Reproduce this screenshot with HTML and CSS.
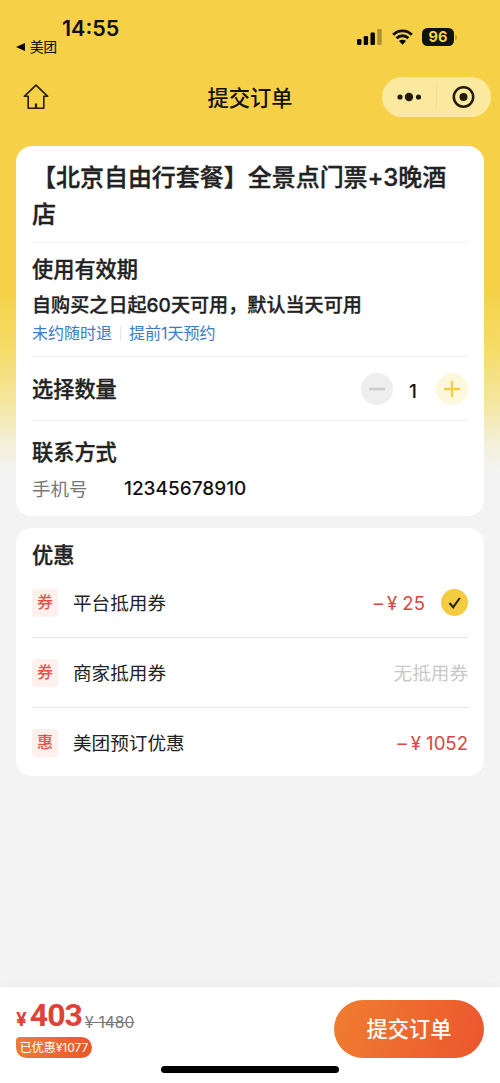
FILE: index.html
```html
<!DOCTYPE html>
<html lang="zh-CN">
<head>
<meta charset="utf-8">
<title>提交订单</title>
<link rel="stylesheet" href="styles.css">
</head>
<body>
<div class="page">
  <header class="top">
    <div class="status">
      <div class="status-left">
        <div class="time">14:55</div>
        <div class="back-app"><svg width="9" height="8" viewBox="0 0 9 8"><path d="M0 4 9 0v8z"/></svg><span>美团</span></div>
      </div>
      <div class="status-right">
        <svg class="signal" width="25" height="16" viewBox="0 0 25 16"><rect x="0" y="10" width="4.4" height="6" rx="1.2"/><rect x="6.7" y="7" width="4.4" height="9" rx="1.2"/><rect x="13.5" y="3.5" width="4.4" height="12.5" rx="1.2"/><rect x="20.3" y="0" width="4.4" height="16" rx="1.2" opacity=".3"/></svg>
        <svg class="wifi" width="21" height="16" viewBox="0 0 22 16"><g fill="none" stroke="#111" stroke-width="3"><path d="M1.2 5.6a14 14 0 0 1 19.6 0"/><path d="M4.8 9.3a8.8 8.8 0 0 1 12.4 0"/></g><path d="M11 16 7.3 12.3a5.3 5.3 0 0 1 7.4 0z"/></svg>
        <div class="battery">96</div>
        <i class="battery-tip"></i>
      </div>
    </div>
    <nav class="nav">
      <svg class="home" width="26" height="26" viewBox="0 0 26 26"><path d="M13 1.2 1.3 12.3H5.2V24.2H20.8V12.3H24.7Z" fill="none" stroke="#2a1d05" stroke-width="1.6" stroke-linejoin="round"/><path d="M13 19.5v4.5" stroke="#2a1d05" stroke-width="2.2"/></svg>
      <h1 class="nav-title">提交订单</h1>
      <div class="capsule">
        <svg width="54" height="40" viewBox="0 0 54 40"><circle cx="18" cy="20" r="2.6"/><circle cx="27" cy="20" r="4.2"/><circle cx="36.5" cy="20" r="2.6"/></svg>
        <i class="capsule-line"></i>
        <svg width="54" height="40" viewBox="0 0 54 40"><circle cx="26.5" cy="20" r="9.7" fill="none" stroke="#231b09" stroke-width="2.5"/><circle cx="26.5" cy="20" r="4"/></svg>
      </div>
    </nav>
  </header>

  <main class="content">
    <section class="card order">
      <div class="product">【北京自由行套餐】全景点门票+3晚酒店</div>
      <div class="block validity">
        <h2 class="heading">使用有效期</h2>
        <p class="valid-text">自购买之日起60天可用，默认当天可用</p>
        <p class="links"><span>未约随时退</span><i class="link-line"></i><span>提前1天预约</span></p>
      </div>
      <div class="block quantity">
        <h2 class="heading">选择数量</h2>
        <div class="stepper">
          <svg class="step minus" width="32" height="32" viewBox="0 0 32 32"><path d="M8 16h16"/></svg>
          <span class="count">1</span>
          <svg class="step plus" width="32" height="32" viewBox="0 0 32 32"><path d="M8 16h16M16 8v16"/></svg>
        </div>
      </div>
      <div class="block contact">
        <h2 class="heading">联系方式</h2>
        <p class="phone"><span class="phone-label">手机号</span><span>12345678910</span></p>
      </div>
    </section>

    <section class="card discounts">
      <h2 class="heading">优惠</h2>
      <div class="row"><span class="tag">券</span><span class="name">平台抵用券</span><span class="amount">–<span class="yen">¥</span>25</span><svg class="check" width="27" height="27" viewBox="0 0 27 27"><circle cx="13.5" cy="13.5" r="13.5"/><path d="m8.5 14 3.7 4.2 6.6-9.2"/></svg></div>
      <div class="row"><span class="tag">券</span><span class="name">商家抵用券</span><span class="none">无抵用券</span></div>
      <div class="row"><span class="tag">惠</span><span class="name">美团预订优惠</span><span class="amount">–<span class="yen">¥</span>1052</span></div>
    </section>
  </main>

  <footer class="footer">
    <div class="footer-main">
      <div class="total">
        <div class="prices"><span class="currency">¥</span><span class="price">403</span><span class="old">¥ 1480</span></div>
        <div class="saved">已优惠¥1077</div>
      </div>
      <div class="submit">提交订单</div>
    </div>
    <div class="home-bar"></div>
  </footer>
</div>
</body>
</html>
```

FILE: styles.css
```css
* { box-sizing: border-box; }
body, h1, h2, p { margin: 0; }
body {
  font-family: Inter, "Noto Sans CJK SC", sans-serif;
  color: #222;
}
svg { display: block; flex: none; }
.page {
  height: 1083px;
  display: flex;
  flex-direction: column;
  background: linear-gradient(#f6d147 0, #f6d147 290px, #f5dc69 350px, #f4e69c 400px, #f3f0dc 445px, #f3f3f3 470px);
}
.status {
  height: 68px;
  display: flex;
  justify-content: space-between;
  padding: 15px 43px 0 16px;
  color: #111;
}
.time {
  font-size: 21.5px;
  font-weight: 600;
  line-height: 26px;
  padding-left: 46px;
}
.back-app {
  display: flex;
  align-items: center;
  gap: 5px;
  font-size: 13.5px;
  line-height: 12px;
  -webkit-text-stroke: .15px;
}
.status-right {
  display: flex;
  align-items: center;
  height: 20px;
  margin-top: 12px;
}
.signal { margin-right: 9.5px; }
.wifi { margin-right: 9.5px; }
.battery {
  width: 32px;
  height: 18px;
  border-radius: 5.5px;
  background: #111;
  color: #f6d147;
  font-size: 14.5px;
  font-weight: 700;
  line-height: 18px;
  text-align: center;
}
.battery-tip {
  width: 2px;
  height: 5px;
  margin-left: 1px;
  border-radius: 0 2px 2px 0;
  background: #c2a43b;
}
.nav {
  height: 78px;
  display: grid;
  grid-template-columns: 109px 1fr 109px;
  align-items: start;
  padding: 9px 9px 0;
}
.home { margin: 7px 0 0 14px; }
.nav-title {
  font-size: 21.3px;
  font-weight: 500;
  line-height: 42px;
  text-align: center;
  color: #111;
}
.capsule {
  height: 40px;
  display: flex;
  align-items: center;
  border-radius: 20px;
  background: #fae99f;
  fill: #231b09;
}
.capsule-line { width: 1px; height: 26px; background: #f3e093; }
.content {
  flex: 1;
  display: flex;
  flex-direction: column;
  gap: 12.5px;
  padding: 0 16px;
}
.card { background: #fff; border-radius: 16px; padding: 0 16px; }
.order { height: 369.5px; padding-top: 13px; }
.product {
  height: 83px;
  font-size: 24px;
  font-weight: 500;
  line-height: 37px;
  letter-spacing: -.03px;
  -webkit-text-stroke: .35px;
}
.block { border-top: 1px solid #f3f3f3; }
.heading {
  font-size: 21.2px;
  font-weight: 500;
  line-height: 30px;
  -webkit-text-stroke: .35px;
}
.validity { height: 114px; padding-top: 11px; }
.valid-text {
  margin-top: 7px;
  font-size: 19.1px;
  font-weight: 500;
  line-height: 28px;
  -webkit-text-stroke: .3px;
}
.links {
  display: flex;
  align-items: center;
  gap: 8px;
  margin-top: 2px;
  font-size: 16px;
  line-height: 24px;
  color: #3c7bc8;
}
.link-line { width: 1px; height: 15px; background: #e2e5e9; }
.quantity {
  height: 64px;
  display: flex;
  align-items: center;
  justify-content: space-between;
}
.stepper { display: flex; align-items: center; }
.step { border-radius: 50%; fill: none; stroke-width: 2.4; }
.minus { background: #eee; stroke: #ccc; }
.plus { background: #fdf8dc; stroke: #f4cf46; }
.count {
  width: 43px;
  padding-top: 5px;
  padding-right: 3px;
  text-align: center;
  font-size: 19px;
  font-weight: 500;
  color: #111;
}
.contact { padding-top: 16px; }
.phone {
  display: flex;
  margin-top: 8px;
  font-size: 19px;
  line-height: 28px;
  color: #111;
  font-weight: 500;
}
.phone-label { width: 92px; font-size: 18.5px; font-weight: 400; color: #777; }
.discounts { height: 247.5px; padding-top: 12px; }
.discounts .heading { height: 28px; }
.row {
  height: 70px;
  display: flex;
  align-items: center;
  border-bottom: 1px solid #e6e6e6;
  font-size: 18.6px;
}
.row:last-child { border-bottom: 0; height: 69px; }
.tag {
  width: 26px;
  height: 28px;
  border-radius: 3px;
  background: #fdf0ed;
  color: #e3534b;
  font-size: 16px;
  font-weight: 500;
  line-height: 27px;
  text-align: center;
}
.name { flex: 1; padding: 0 0 2px 15px; }
.amount { color: #d8463f; }
.yen { margin: 0 5px 0 4px; }
.check { margin-left: 16px; fill: #f3cc42; }
.check path { fill: none; stroke: #2b240c; stroke-width: 2.1; }
.none { padding-bottom: 2px; color: #c8c8c8; }
.footer {
  height: 96px;
  background: #fff;
  box-shadow: 0 -2px 8px rgba(0, 0, 0, .035);
}
.footer-main {
  height: 79px;
  display: flex;
  justify-content: space-between;
  padding: 13px 16px 0;
}
.prices {
  display: flex;
  align-items: baseline;
  height: 37px;
  line-height: 33px;
  color: #df4238;
}
.currency { font-size: 19px; font-weight: 700; }
.price {
  margin-left: 3px;
  font: 700 32px/31px Roboto, sans-serif;
  letter-spacing: -1px;
}
.old {
  margin: 2px 0 -2px 3px;
  padding-top: 2px;
  align-self: flex-start;
  font-size: 15.6px;
  line-height: 38px;
  color: #777;
  text-decoration: line-through;
  white-space: pre;
  word-spacing: .5px;
}
.saved {
  width: 76px;
  height: 21px;
  border-radius: 4px 11px 11px 11px;
  background: linear-gradient(100deg, #ed7d38, #e9572b);
  color: #fff;
  font-size: 12px;
  line-height: 21px;
  text-align: center;
}
.submit {
  width: 150px;
  height: 58px;
  border-radius: 29px;
  background: linear-gradient(110deg, #ef7e30, #ec552e);
  color: #fff;
  font-size: 21.2px;
  font-weight: 500;
  line-height: 58px;
  text-align: center;
}
.home-bar { width: 178px; height: 7px; margin: 0 auto; border-radius: 4px; background: #000; }
```
